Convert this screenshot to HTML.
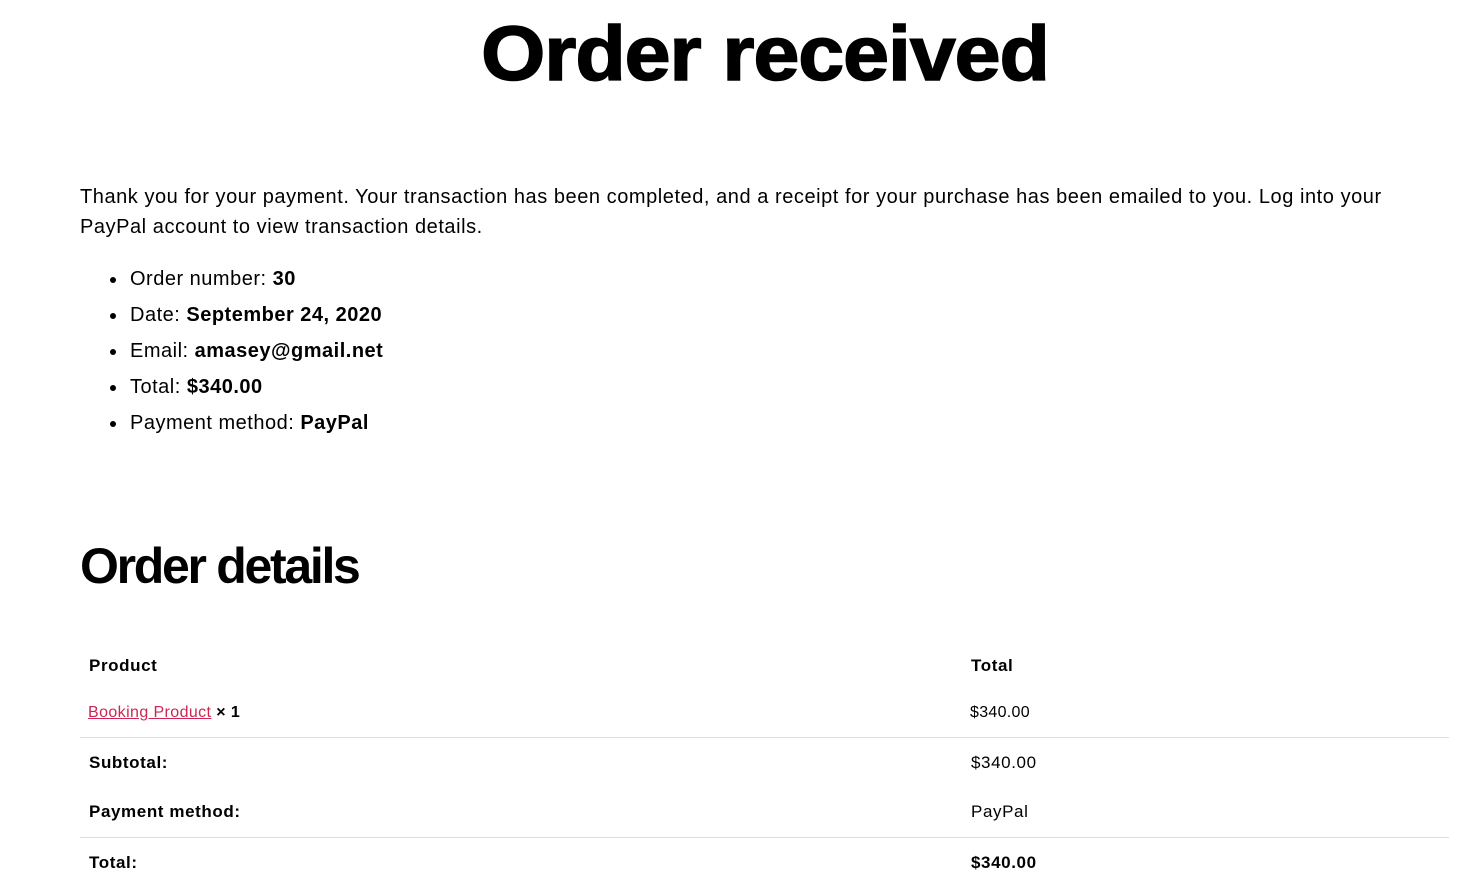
<!DOCTYPE html>
<html><head><meta charset="utf-8"><style>
body{margin:0;background:#fff;color:#000;font-family:"Liberation Sans",sans-serif;width:1478px;height:875px;overflow:hidden;position:relative}
.a{position:absolute;white-space:nowrap}
h1{position:absolute;margin:0;left:0;width:1530px;text-align:center;top:16px;font-size:77px;font-weight:700;letter-spacing:-1px;line-height:1;-webkit-text-stroke:1.5px #000;transform:scaleX(1.072);transform-origin:765px 0}
h2{position:absolute;margin:0;left:80px;top:541px;font-size:50px;font-weight:700;letter-spacing:-2.3px;line-height:1}
p{position:absolute;margin:0;left:80px;top:182px;width:1360px;font-size:20px;line-height:30px;letter-spacing:.55px}
.li{position:absolute;left:130px;font-size:20px;line-height:24px;letter-spacing:.5px}
.li:before{content:"";position:absolute;left:-20px;top:10px;width:6px;height:6px;border-radius:50%;background:#000}
.t{font-size:17px;line-height:20px;letter-spacing:.6px}
.hr{position:absolute;left:80px;width:1369px;height:1px;background:#ddd}
a{color:#cd2653}
</style></head><body>
<h1>Order received</h1>
<p>Thank you for your payment. Your transaction has been completed, and a receipt for your purchase has been emailed to you. Log into your PayPal account to view transaction details.</p>
<div class="li" style="top:267px">Order number: <b>30</b></div>
<div class="li" style="top:303px">Date: <b>September 24, 2020</b></div>
<div class="li" style="top:339px">Email: <b>amasey@gmail.net</b></div>
<div class="li" style="top:375px">Total: <b>$340.00</b></div>
<div class="li" style="top:411px">Payment method: <b>PayPal</b></div>
<h2>Order details</h2>
<div class="a t" style="left:89px;top:656px"><b>Product</b></div>
<div class="a t" style="left:971px;top:656px"><b>Total</b></div>
<div class="a" style="left:88px;top:704px;font-size:16px;letter-spacing:.4px"><a href="#">Booking Product</a> <b>× 1</b></div>
<div class="a" style="left:970px;top:704px;font-size:16px;letter-spacing:.3px">$340.00</div>
<div class="hr" style="top:737px"></div>
<div class="a t" style="left:89px;top:753px"><b>Subtotal:</b></div>
<div class="a t" style="left:971px;top:753px">$340.00</div>
<div class="a t" style="left:89px;top:802px"><b>Payment method:</b></div>
<div class="a t" style="left:971px;top:802px">PayPal</div>
<div class="hr" style="top:837px"></div>
<div class="a t" style="left:89px;top:853px"><b>Total:</b></div>
<div class="a t" style="left:971px;top:853px"><b>$340.00</b></div>
</body></html>
